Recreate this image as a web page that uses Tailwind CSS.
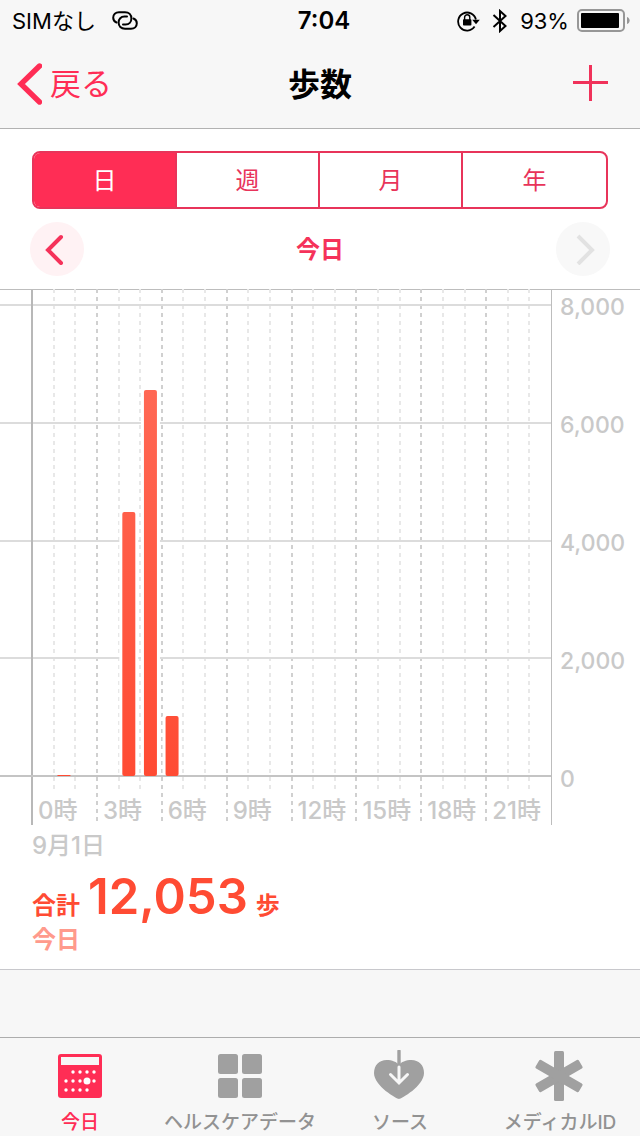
<!DOCTYPE html>
<html lang="ja">
<head>
    <meta charset="UTF-8">
    <meta name="viewport" content="width=device-width, initial-scale=1.0">
    <title>歩数</title>
    <script src="https://cdn.jsdelivr.net/npm/@tailwindcss/browser@4"></script>
</head>
<body class="bg-[#f7f7f7] min-h-screen flex flex-col font-['Inter','Noto_Sans_CJK_JP',sans-serif] text-black">
    <header class="border-b border-[#b2b2b2]">
        <!-- status bar -->
        <div class="h-10 pt-0.5 grid grid-cols-3 items-center px-3 text-[22px] leading-9">
            <div class="flex items-center gap-4">
                <span>SIMなし</span>
                <svg class="w-[26px] h-5" viewBox="0 0 26 20" fill="none" stroke="#000" stroke-width="2" stroke-linecap="round">
                    <path d="M4.500 11.500C2.400 10.600 1.200 9 1.200 6.800C1.200 3.400 3.600 1.200 7 1.200H13C17 1.200 19.400 3.800 19.400 7.400C19.400 11 17 13.400 13.600 13.400H11"/>
                    <path d="M21.500 7.500C23.600 8.400 24.800 10 24.800 12.200C24.800 15.600 22.400 17.800 19 17.800H13C9 17.800 6.600 15.200 6.600 11.600C6.600 8 9 5.600 12.400 5.600H15"/>
                </svg>
            </div>
            <time class="text-center text-2xl leading-9 font-semibold pl-2">7:04</time>
            <div class="flex items-center justify-end">
                <svg class="w-[23px] h-[22px] mr-3" viewBox="0 0 23 22" fill="none">
                    <path d="M17.6 16.6A9 9 0 1 1 18.9 9.5" stroke="#000" stroke-width="1.8"/>
                    <path d="M15.2 9.8H22.8L19 14.2Z" fill="#000"/>
                    <rect x="6" y="9.2" width="8.4" height="6.4" rx=".8" fill="#000"/>
                    <path d="M7.6 10V7.4A2.6 2.6 0 0 1 12.8 7.4V10" stroke="#000" stroke-width="1.4"/>
                </svg>
                <svg class="w-4 h-6 mr-3" viewBox="0 0 16 24" fill="none" stroke="#000" stroke-width="2">
                    <path d="M1.5 6L13.5 17L8 22V2L13.5 7L1.5 18"/>
                </svg>
                <span>93%</span>
                <svg class="w-[53px] h-6 ml-2 -mr-0.5" viewBox="0 0 53 24">
                    <rect x="1" y="1" width="46" height="21" rx="4" fill="none" stroke="#979797" stroke-width="2"/>
                    <rect x="4" y="4" width="38" height="15" rx="1" fill="#000"/>
                    <path d="M50 8C53.500 9 53.500 14 50 15Z" fill="#979797"/>
                </svg>
            </div>
        </div>
        <!-- nav bar -->
        <div class="h-22 grid grid-cols-3 items-center px-4">
            <a href="#" class="flex items-center gap-2 text-[31px] text-[#ff2d55]">
                <svg class="w-[26px] h-11" viewBox="0 0 26 44" fill="none" stroke="#ff2d55" stroke-width="5.400" stroke-linecap="round">
                    <path d="M23.500 4L5 22L23.500 40"/>
                </svg>
                <span>戻る</span>
            </a>
            <h1 class="text-center text-[32px] leading-10 font-bold pt-0.5">歩数</h1>
            <button type="button" aria-label="追加" class="justify-self-end mr-4 mb-0.5">
                <svg class="w-9 h-9" viewBox="0 0 36 36" stroke="#f0325a" stroke-width="3">
                    <path d="M18.500 0V36M1 17.500H36"/>
                </svg>
            </button>
        </div>
    </header>

    <main class="bg-white border-b border-[#c8c8cc]">
        <div class="mx-8 mt-[22px] h-[58px] grid grid-cols-4 divide-x-2 divide-[#e8345a] border-2 border-[#e8345a] rounded-lg overflow-hidden text-2xl text-[#e8345a]">
            <button type="button" class="pt-0.5 bg-[#ff2d55] text-white">日</button>
            <button type="button" class="pt-0.5">週</button>
            <button type="button" class="pt-0.5">月</button>
            <button type="button" class="pt-0.5">年</button>
        </div>

        <div class="mx-[30px] my-[13px] flex items-center justify-between">
            <button type="button" aria-label="前の日" class="size-[54px] rounded-full bg-[#fff2f4] flex items-center justify-center">
                <svg class="w-5 h-8 mr-1.5" viewBox="0 0 20 32" fill="none" stroke="#f5325a" stroke-width="4" stroke-linecap="round">
                    <path d="M17 4L4 17L17 30"/>
                </svg>
            </button>
            <h2 class="text-2xl leading-8 font-bold text-[#f5325a] pt-0.5">今日</h2>
            <button type="button" aria-label="次の日" disabled class="size-[54px] rounded-full bg-[#f8f8f8] flex items-center justify-center">
                <svg class="w-5 h-8 ml-1" viewBox="0 0 20 32" fill="none" stroke="#e2e2e2" stroke-width="4">
                    <path d="M3 3L17 17L3 31"/>
                </svg>
            </button>
        </div>

        <div class="border-t border-[#bdbdbd] flex pl-8 text-2xl font-medium text-[#c9c9c9]">
            <div class="relative flex-1 h-[535px] flex items-end border-r border-[#bdbdbd]">
                <svg id="chart" class="absolute inset-0 w-full h-full overflow-visible">
                    <defs>
                        <linearGradient id="barFill" gradientUnits="userSpaceOnUse" x1="0" y1="0" x2="0" y2="486">
                            <stop offset="0" stop-color="#ff6f5c"/>
                            <stop offset="1" stop-color="#ff4b33"/>
                        </linearGradient>
                    </defs>
                </svg>
                <div class="relative w-full grid grid-cols-8 leading-7">
                    <span class="pl-1.5 whitespace-nowrap">0時</span>
                    <span class="pl-1.5 whitespace-nowrap">3時</span>
                    <span class="pl-1.5 whitespace-nowrap">6時</span>
                    <span class="pl-1.5 whitespace-nowrap">9時</span>
                    <span class="pl-1.5 whitespace-nowrap">12時</span>
                    <span class="pl-1.5 whitespace-nowrap">15時</span>
                    <span class="pl-1.5 whitespace-nowrap">18時</span>
                    <span class="pl-1.5 whitespace-nowrap">21時</span>
                </div>
            </div>
            <div class="w-22 h-[535px] pl-2 text-[23px] leading-[34px]">
                <div class="h-[118px]">8,000</div>
                <div class="h-[118px]">6,000</div>
                <div class="h-[118px]">4,000</div>
                <div class="h-[118px]">2,000</div>
                <div>0</div>
            </div>
        </div>

        <div class="px-8 pb-4">
            <p class="text-2xl leading-[42px] font-medium text-[#c9c9c9]">9月1日</p>
            <p class="h-[60px] flex items-baseline gap-2 text-2xl font-bold text-[#ff4b33]">
                <span>合計</span>
                <span class="text-[49px] leading-[60px] font-semibold">12,053</span>
                <span>歩</span>
            </p>
            <p class="text-2xl leading-[26px] font-bold text-[#ff9a8c]">今日</p>
        </div>
    </main>

    <nav class="mt-auto h-[99px] border-t border-[#adadad] grid grid-cols-4 text-[19px] leading-[26px] font-medium text-[#929292]">
        <a href="#" class="flex flex-col items-center pt-3 gap-2 text-[#ff2d55]">
            <svg class="size-[52px]" viewBox="0 0 52 52">
                <rect x="4" y="4" width="44" height="44" rx="3" fill="#ff2d55"/>
                <rect x="7" y="7" width="38" height="8" fill="#f7f7f7"/>
                <g fill="#fff">
                    <circle cx="19" cy="22" r="1.700"/><circle cx="26" cy="22" r="1.700"/><circle cx="33" cy="22" r="1.700"/><circle cx="40" cy="22" r="1.700"/>
                    <circle cx="12" cy="31" r="1.700"/><circle cx="19" cy="31" r="1.700"/><circle cx="26" cy="31" r="1.700"/><circle cx="33" cy="31" r="3.500"/><circle cx="40" cy="31" r="1.700"/>
                    <circle cx="12" cy="40" r="1.700"/><circle cx="19" cy="40" r="1.700"/><circle cx="26" cy="40" r="1.700"/><circle cx="33" cy="40" r="1.700"/>
                </g>
            </svg>
            <span>今日</span>
        </a>
        <a href="#" class="flex flex-col items-center pt-3 gap-2">
            <svg class="size-[52px]" viewBox="0 0 52 52" fill="#a0a0a0">
                <rect x="4" y="4" width="20" height="20" rx="2.500"/>
                <rect x="28" y="4" width="20" height="20" rx="2.500"/>
                <rect x="4" y="28" width="20" height="20" rx="2.500"/>
                <rect x="28" y="28" width="20" height="20" rx="2.500"/>
            </svg>
            <span class="whitespace-nowrap">ヘルスケアデータ</span>
        </a>
        <a href="#" class="flex flex-col items-center pt-3 gap-2">
            <svg class="size-[52px]" viewBox="0 0 52 52" fill="none" stroke-linecap="round">
                <path d="M25 49C23 49 0 36 0 23C0 15 5.500 10 12.500 10C18 10 23 12 25 15C27 12 32 10 37.500 10C44.500 10 50 15 50 23C50 36 27 49 25 49Z" fill="#a0a0a0"/>
                <path d="M25 1V14" stroke="#a0a0a0" stroke-width="3.400"/>
                <path d="M25 17V32M16.500 24.500L25 33L33.500 24.500" stroke="#f7f7f7" stroke-width="3"/>
            </svg>
            <span>ソース</span>
        </a>
        <a href="#" class="flex flex-col items-center pt-3 gap-2">
            <svg class="size-[52px]" viewBox="0 0 52 52" fill="#a0a0a0">
                <rect x="20" y="1" width="10" height="50" rx="1.500"/>
                <rect x="20" y="1" width="10" height="50" rx="1.500" transform="rotate(60 25 26)"/>
                <rect x="20" y="1" width="10" height="50" rx="1.500" transform="rotate(-60 25 26)"/>
            </svg>
            <span>メディカルID</span>
        </a>
    </nav>

    <script>
        // steps per hour
        const steps = { 1: 17, 4: 4484, 5: 6552, 6: 1019 };

        const chart = document.getElementById('chart');
        const baseY = 486;
        const unit = 471 / 8000;

        function add(tag, attrs) {
            const el = document.createElementNS('http://www.w3.org/2000/svg', tag);
            for (const key in attrs) {
                el.setAttribute(key, attrs[key]);
            }
            chart.appendChild(el);
        }

        for (let h = 1; h < 24; h++) {
            const major = h % 3 === 0;
            const x = (h / 24 * 100) + '%';
            add('line', {
                x1: x, x2: x, y1: -1, y2: major ? 532 : 499,
                stroke: major ? '#d0d0d0' : '#e8e8e8',
                'stroke-width': 2, 'stroke-dasharray': '4 4', 'shape-rendering': 'crispEdges'
            });
        }

        for (let v = 2000; v <= 8000; v += 2000) {
            const y = Math.round(baseY - v * unit);
            add('line', { x1: -32, x2: '100%', y1: y, y2: y, stroke: '#dcdcdc', 'stroke-width': 2 });
        }
        add('line', { x1: 0, x2: 0, y1: 0, y2: 535, stroke: '#b8b8b8', 'stroke-width': 2 });
        add('line', { x1: -32, x2: '100%', y1: baseY, y2: baseY, stroke: '#c4c4c4', 'stroke-width': 2 });

        // bars, the tall ones with a white gap around them
        for (const h in steps) {
            const height = Math.round(steps[h] * unit);
            const x = ((Number(h) + 0.5) / 24 * 100) + '%';
            if (height > 4) {
                add('rect', { x: x, y: baseY - height, width: 19, height: height - 1, fill: '#fff', transform: 'translate(-10 0)' });
            }
            add('rect', { x: x, y: baseY - height, width: 13, height: height, rx: height > 4 ? 2 : 0, fill: 'url(#barFill)', transform: 'translate(-7 0)' });
        }
    </script>
</body>
</html>
